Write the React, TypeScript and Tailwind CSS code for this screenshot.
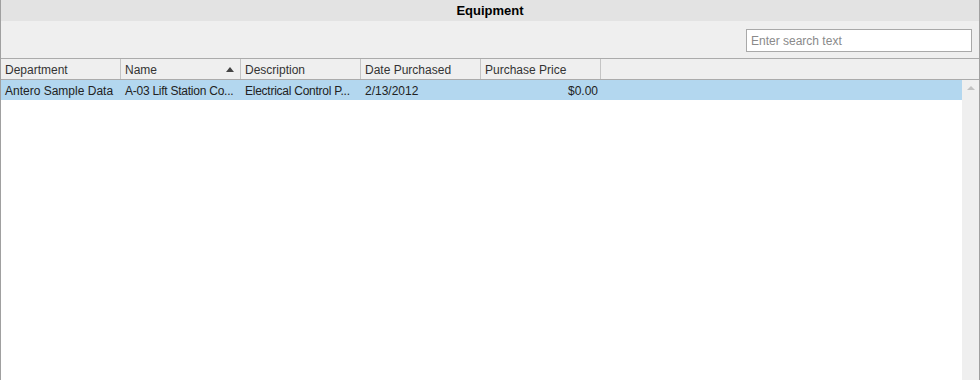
import React from "react";

const columns = [
  { label: "Department", sorted: false },
  { label: "Name", sorted: true },
  { label: "Description", sorted: false },
  { label: "Date Purchased", sorted: false },
  { label: "Purchase Price", sorted: false },
];

export default function App() {
  return (
    <div
      className="flex h-[380px] w-[980px] flex-col border-x border-[#a0a0a0] bg-white text-[12px] text-[#333]"
      style={{ fontFamily: '"Liberation Sans", Arial, sans-serif' }}
    >
      {/* title */}
      <div className="flex h-[21px] items-center justify-center bg-[#e3e3e3] pt-[1px] text-[13px] font-bold text-black">
        Equipment
      </div>

      {/* toolbar */}
      <div className="flex h-[38px] items-start justify-end border-b border-[#ababab] bg-[#efefef] pr-[7px] pt-[8px]">
        <div className="flex h-[23px] w-[226px] items-center border border-[#a9a9a9] bg-white px-[4px] pt-[1px] text-[#8a8a8a]">
          Enter search text
        </div>
      </div>

      {/* header */}
      <div className="flex h-[21px] border-b border-[#ababab] bg-[#efefef]">
        {columns.map((c) => (
          <div
            key={c.label}
            className="flex w-[120px] shrink-0 items-center justify-between border-r border-[#c4c4c4] pl-[4px] pr-[6px] pt-[2px]"
          >
            <span>{c.label}</span>
            {c.sorted && (
              <svg width="8" height="5" viewBox="0 0 8 5" className="mb-[2px]">
                <path d="M0 5 L4 0 L8 5 Z" fill="#444" />
              </svg>
            )}
          </div>
        ))}
        <div className="flex-1" />
      </div>

      {/* body */}
      <div className="flex flex-1">
        <div className="flex-1">
          <div className="flex h-[20px] items-center bg-[#b3d7ef] pt-[1px] text-[#222]">
            <div className="w-[120px] shrink-0 overflow-hidden whitespace-nowrap pl-[4px]">Antero Sample Data</div>
            <div className="w-[120px] shrink-0 overflow-hidden whitespace-nowrap pl-[4px] tracking-[-0.25px]">A-03 Lift Station Co...</div>
            <div className="w-[120px] shrink-0 overflow-hidden whitespace-nowrap pl-[4px] tracking-[-0.25px]">Electrical Control P...</div>
            <div className="w-[120px] shrink-0 overflow-hidden whitespace-nowrap pl-[4px]">2/13/2012</div>
            <div className="w-[120px] shrink-0 overflow-hidden whitespace-nowrap pr-[3px] text-right">$0.00</div>
          </div>
        </div>
        <div className="flex w-[17px] justify-center bg-[#efefef] pt-[6px]">
          <svg width="8" height="4" viewBox="0 0 8 4">
            <path d="M0 4 L4 0 L8 4 Z" fill="#c2c2c2" />
          </svg>
        </div>
      </div>
    </div>
  );
}
